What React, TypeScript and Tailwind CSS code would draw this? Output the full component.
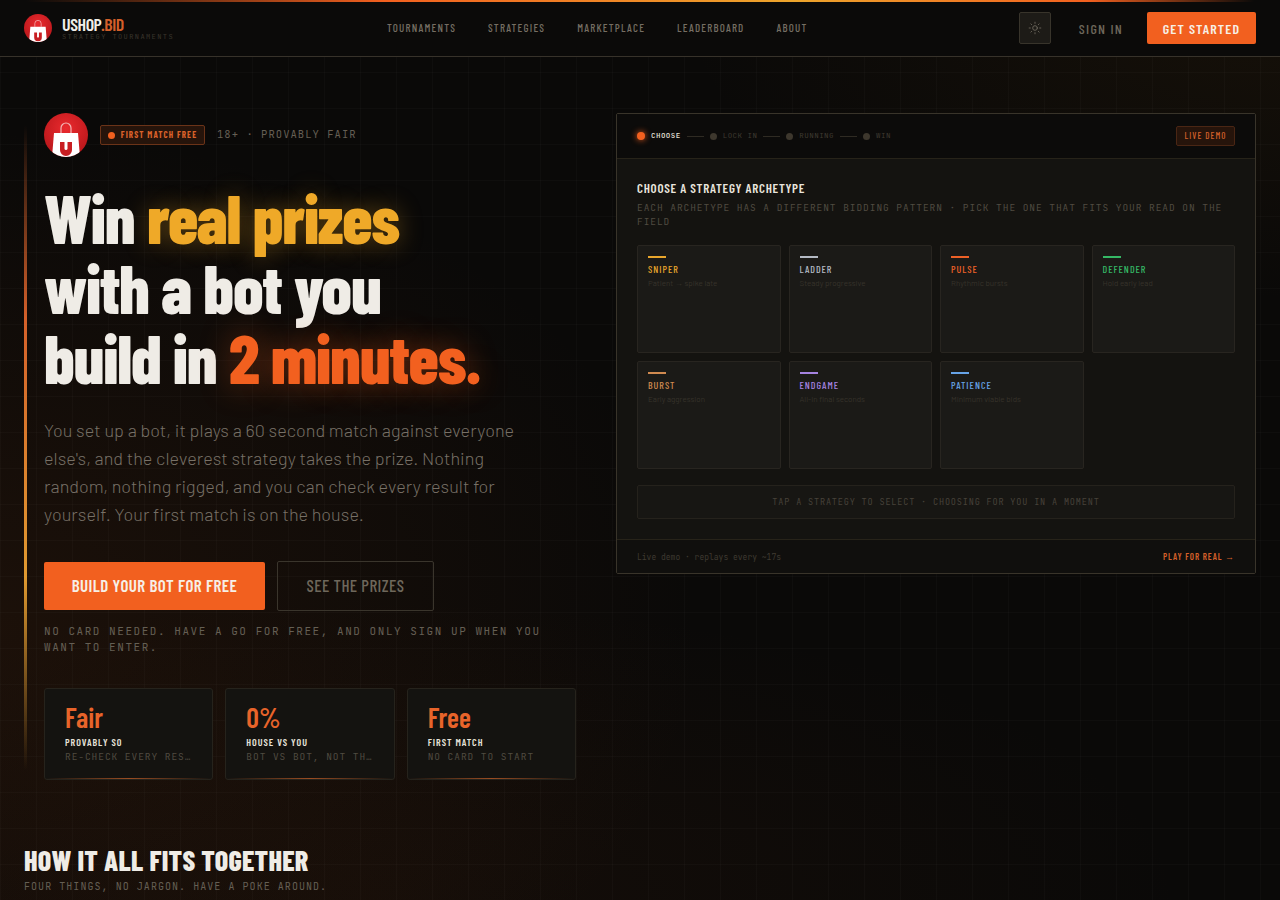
import { Sun } from "lucide-react";

const cond = "font-['Barlow_Condensed','Roboto_Condensed',sans-serif]";
const mono = "font-['JetBrains_Mono','Liberation_Mono',monospace]";

const navLinks = ["TOURNAMENTS", "STRATEGIES", "MARKETPLACE", "LEADERBOARD", "ABOUT"];

const strategies = [
  { name: "SNIPER", desc: "Patient → spike late", bar: "bg-[#e9a62c]", text: "text-[#e9a62c]" },
  { name: "LADDER", desc: "Steady progressive", bar: "bg-[#b4bac4]", text: "text-[#b4bac4]" },
  { name: "PULSE", desc: "Rhythmic bursts", bar: "bg-[#ee6127]", text: "text-[#ee6127]" },
  { name: "DEFENDER", desc: "Hold early lead", bar: "bg-[#35b865]", text: "text-[#35b865]" },
  { name: "BURST", desc: "Early aggression", bar: "bg-[#d08a50]", text: "text-[#d08a50]" },
  { name: "ENDGAME", desc: "All-in final seconds", bar: "bg-[#a583e0]", text: "text-[#a583e0]" },
  { name: "PATIENCE", desc: "Minimum viable bids", bar: "bg-[#67a3e6]", text: "text-[#67a3e6]" },
];

const stats = [
  { value: "Fair", label: "PROVABLY SO", sub: "RE-CHECK EVERY RESULT" },
  { value: "0%", label: "HOUSE VS YOU", sub: "BOT VS BOT, NOT THE HOUSE" },
  { value: "Free", label: "FIRST MATCH", sub: "NO CARD TO START" },
];

function Logo({ size }: { size: number }) {
  return (
    <svg width={size} height={size} viewBox="0 0 44 44" className="shrink-0">
      <defs>
        <radialGradient id="lg" cx="50%" cy="35%" r="70%">
          <stop offset="0%" stopColor="#ea2a2e" />
          <stop offset="100%" stopColor="#b51519" />
        </radialGradient>
        <clipPath id="lc">
          <circle cx="22" cy="22" r="22" />
        </clipPath>
      </defs>
      <circle cx="22" cy="22" r="22" fill="url(#lg)" />
      <g clipPath="url(#lc)">
        <path d="M17 20v-5a5 5 0 0 1 10 0v5" fill="none" stroke="#f3b5b5" strokeWidth="1.2" />
        <path d="M10 20h24l2 24H8z" fill="#fff" />
        <path d="M16 29h4.5v7a1.6 1.6 0 0 0 3 0v-7H28v8a6 6 0 0 1-12 0z" fill="#c81e22" />
      </g>
    </svg>
  );
}

function Step({ label, active }: { label: string; active?: boolean }) {
  return (
    <div className="flex items-center gap-[6px]">
      <span className={active ? "size-[8px] rounded-full bg-[#f2601f] shadow-[0_0_6px_#f2601f]" : "size-[7px] rounded-full bg-[#3d372d]"} />
      <span className={`${mono} text-[7.5px] tracking-[0.06em] ${active ? "font-medium text-[#e6e2da]" : "text-[#3f3a31]"}`}>{label}</span>
    </div>
  );
}

function Connector() {
  return <span className="mx-[6px] h-px w-[17px] bg-[#2f2b23]" />;
}

export default function App() {
  return (
    <div className="relative h-[900px] w-[1280px] overflow-hidden bg-[#0a0908] text-[#eeebe5] font-['Barlow','Roboto',sans-serif]">
      {/* grid + glows */}
      <div className="absolute inset-0 bg-[radial-gradient(ellipse_700px_500px_at_0%_70%,rgba(120,55,15,0.16),transparent),radial-gradient(ellipse_600px_300px_at_100%_0%,rgba(110,70,15,0.12),transparent),radial-gradient(ellipse_800px_300px_at_30%_100%,rgba(110,50,15,0.1),transparent)]" />
      <div className="absolute inset-0 bg-[linear-gradient(rgba(255,255,255,0.018)_1px,transparent_1px),linear-gradient(90deg,rgba(255,255,255,0.018)_1px,transparent_1px)] bg-size-[36px_36px]" />

      <div className="relative">
        <header className="relative flex h-[57px] items-center border-b border-[#37322a] bg-[#0b0a09] px-6">
          <div className="absolute inset-x-0 top-0 h-[2px] bg-[linear-gradient(90deg,transparent_2%,#f2601f_30%,#eda52c_62%,#f2601f_85%,transparent_98%)]" />
          <div className="flex w-[363px] items-center gap-[10px]">
            <Logo size={28} />
            <div className="flex flex-col">
              <span className={`${cond} text-[18px] leading-[18px] font-semibold tracking-[-0.025em] text-[#f1eee8]`}>
                USHOP<span className="text-[#d4602a]">.BID</span>
              </span>
              <span className={`${mono} text-[7px] leading-[8px] tracking-[0.2em] text-[#3a352c]`}>STRATEGY TOURNAMENTS</span>
            </div>
          </div>
          <nav className="flex items-center gap-8">
            {navLinks.map((n) => (
              <span key={n} className={`${cond} text-[11px] font-medium tracking-[0.11em] text-[#756e63]`}>{n}</span>
            ))}
          </nav>
          <div className="ml-auto flex items-center">
            <div className="flex size-8 items-center justify-center rounded-[2px] border border-[#38342b] bg-[#1d1b17]">
              <Sun size={14} strokeWidth={1.3} className="text-[#7a7468]" />
            </div>
            <span className={`${cond} ml-7 text-[14px] font-medium tracking-[0.09em] text-[#6e675b]`}>SIGN IN</span>
            <div className={`${cond} ml-6 flex h-8 w-[109px] items-center justify-center rounded-[2px] bg-[#f2601f] text-[14px] font-semibold tracking-[0.08em] text-[#f7efe6]`}>GET STARTED</div>
          </div>
        </header>

        {/* accent rail */}
        <div className="absolute left-6 top-[125px] h-[645px] w-[3px] bg-[linear-gradient(180deg,transparent,#d4602a_30%,#e09a30_70%,transparent)]" />

        <main className="grid grid-cols-[552px_640px] gap-10 px-6 pt-14">
          <section className="pl-5">
            <div className="flex items-center">
              <Logo size={44} />
              <div className="ml-3 flex h-5 w-[105px] items-center justify-center gap-[6px] rounded-[2px] border border-[#6b3318] bg-[#26140b]">
                <span className="size-[7px] rounded-full bg-[#f2601f]" />
                <span className={`${cond} text-[9px] font-bold tracking-[0.12em] text-[#d9612a]`}>FIRST MATCH FREE</span>
              </div>
              <span className={`${mono} ml-3 text-[10.5px] tracking-[0.1em] text-[#655f54]`}>18+ · PROVABLY FAIR</span>
            </div>

            <h1 className={`${cond} mt-[25px] text-[68px] leading-[70px] font-extrabold tracking-[-0.018em] text-[#efece6]`}>
              Win <span className="text-[#efa928] [text-shadow:0_0_24px_rgba(239,169,40,0.35)]">real prizes</span>
              <br />
              with a bot you
              <br />
              build in <span className="text-[#f2601f] [text-shadow:0_0_32px_rgba(242,96,31,0.4)]">2 minutes.</span>
            </h1>

            <p className="mt-[24px] w-[490px] text-[18px] leading-[28px] font-light tracking-[0.003em] text-[#777066]">
              You set up a bot, it plays a 60 second match against everyone else's, and the cleverest strategy takes the prize. Nothing random, nothing rigged, and you can check every result for yourself. Your first match is on the house.
            </p>

            <div className="mt-[33px] flex items-center gap-3">
              <div className={`${cond} flex h-12 w-[221px] items-center justify-center rounded-[2px] bg-[#f2601f] text-[17px] font-semibold tracking-[0.025em] text-[#f7efe6]`}>BUILD YOUR BOT FOR FREE</div>
              <div className={`${cond} flex h-[50px] w-[157px] items-center justify-center rounded-[2px] border border-[#3a352c] text-[17px] font-medium tracking-[0.025em] text-[#6e675b]`}>SEE THE PRIZES</div>
            </div>

            <p className={`${mono} mt-[12px] w-[510px] text-[11px] leading-[16px] tracking-[0.14em] text-[#655f54]`}>
              NO CARD NEEDED. HAVE A GO FOR FREE, AND ONLY SIGN UP WHEN YOU WANT TO ENTER.
            </p>

            <div className="mt-[33px] grid grid-cols-3 gap-3">
              {stats.map((s) => (
                <div key={s.value} className="relative h-[92px] rounded-[3px] border border-[#26231c] bg-[#141310] px-5 pt-[12px]">
                  <div className={`${cond} text-[28px] leading-[32px] font-semibold text-[#e8642a]`}>{s.value}</div>
                  <div className={`${cond} mt-[2px] text-[10px] leading-[14px] font-semibold tracking-[0.1em] text-[#e6e2da]`}>{s.label}</div>
                  <div className={`${mono} mt-[1px] truncate text-[9.5px] leading-[14px] tracking-[0.1em] text-[#504b41]`}>{s.sub}</div>
                  <div className="absolute inset-x-0 bottom-0 h-px bg-[linear-gradient(90deg,transparent,#9a4d22,transparent)]" />
                </div>
              ))}
            </div>
          </section>

          <section className="h-[461px] rounded-[2px] border border-[#39342a] bg-[#141310]">
            <div className="flex h-[45px] items-center border-b border-[#272319] bg-[#0c0b0a] px-5">
              <Step label="CHOOSE" active />
              <Connector />
              <Step label="LOCK IN" />
              <Connector />
              <Step label="RUNNING" />
              <Connector />
              <Step label="WIN" />
              <div className={`${cond} ml-auto flex h-5 w-[59px] items-center justify-center rounded-[2px] border border-[#4a2614] bg-[#26140b] text-[9px] font-medium tracking-[0.12em] text-[#d4602a]`}>LIVE DEMO</div>
            </div>

            <div className="h-[381px] border-b border-[#272319] px-5 pt-[21px]">
              <h2 className={`${cond} text-[13px] leading-[16px] font-semibold tracking-[0.057em] text-[#e9e5de]`}>CHOOSE A STRATEGY ARCHETYPE</h2>
              <p className={`${mono} mt-[5px] text-[9.5px] leading-[14px] tracking-[0.1em] text-[#504b41]`}>
                EACH ARCHETYPE HAS A DIFFERENT BIDDING PATTERN · PICK THE ONE THAT FITS YOUR READ ON THE FIELD
              </p>
              <div className="mt-[16px] grid grid-cols-4 gap-2">
                {strategies.map((s) => (
                  <div key={s.name} className="h-[108px] rounded-[2px] border border-[#282520] bg-[#1b1a17] px-[10px] pt-[10px]">
                    <div className={`h-[2px] w-[18px] ${s.bar}`} />
                    <div className={`${cond} mt-[4px] text-[10px] leading-[14px] font-medium tracking-[0.1em] ${s.text}`}>{s.name}</div>
                    <div className="mt-[1px] text-[8px] leading-[13px] text-[#37332b]">{s.desc}</div>
                  </div>
                ))}
              </div>
              <div className={`${mono} mt-4 flex h-[34px] items-center justify-center rounded-[2px] border border-[#25221c] bg-[#171613] text-[8.5px] tracking-[0.1em] text-[#47423a]`}>
                TAP A STRATEGY TO SELECT · CHOOSING FOR YOU IN A MOMENT
              </div>
            </div>

            <div className="flex h-[33px] items-center justify-between bg-[#100f0d] px-5">
              <span className={`${mono} text-[8px] text-[#3f3a31]`}>Live demo · replays every ~17s</span>
              <span className={`${cond} text-[9px] font-semibold tracking-[0.1em] text-[#d4602a]`}>PLAY FOR REAL →</span>
            </div>
          </section>
        </main>

        <div className="mt-[64px] px-6">
          <h2 className={`${cond} text-[28px] leading-[32px] font-extrabold tracking-[0.01em] text-[#efece6]`}>HOW IT ALL FITS TOGETHER</h2>
          <p className={`${mono} mt-[4px] text-[10px] leading-[14px] tracking-[0.105em] text-[#655f54]`}>FOUR THINGS, NO JARGON. HAVE A POKE AROUND.</p>
        </div>
      </div>
    </div>
  );
}
